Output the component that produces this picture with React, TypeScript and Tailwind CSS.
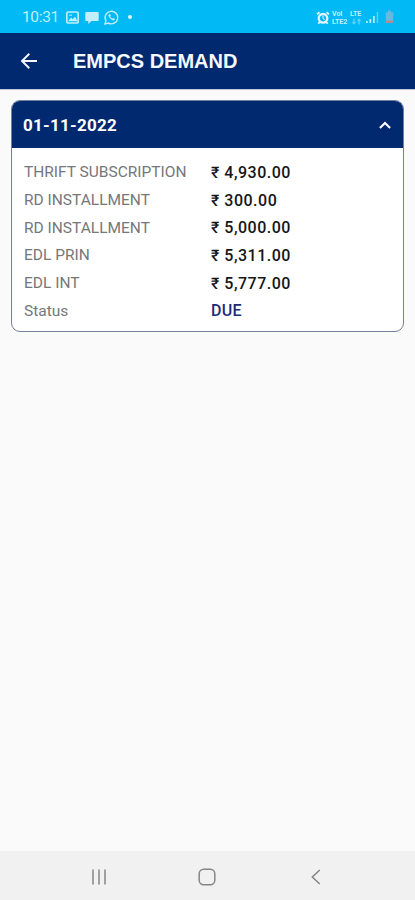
const rows = [
  { label: "THRIFT SUBSCRIPTION", value: "₹ 4,930.00" },
  { label: "RD INSTALLMENT", value: "₹ 300.00" },
  { label: "RD INSTALLMENT", value: "₹ 5,000.00" },
  { label: "EDL PRIN", value: "₹ 5,311.00" },
  { label: "EDL INT", value: "₹ 5,777.00" },
];

function StatusBar() {
  return (
    <div className="flex h-[33px] shrink-0 items-center bg-[#00b9f5] pt-[2px] pl-[22px] text-[#c3effd]">
      <span className="w-[44px] text-[15.5px] tracking-[-0.35px]">10:31</span>
      <svg className="h-[13px] w-[13px]" viewBox="0 0 13 13" fill="none">
        <rect x="0.8" y="1" width="11.4" height="11" rx="1.5" stroke="currentColor" strokeWidth="1.7" />
        <path d="M2 10.300 5 6.600l1.800 1.700L9 5.500l2.500 4.800Z" fill="currentColor" />
        <path d="M3 4.200h3" stroke="currentColor" />
      </svg>
      <svg className="ml-[6px] h-[13px] w-[14px]" viewBox="0 0 14 13" fill="currentColor">
        <path d="M1.3 1h11.4q1 0 1 1v7q0 1-1 1H6.5l-3.2 3v-3h-2q-1 0-1-1V2q0-1 1-1Z" />
      </svg>
      <svg className="ml-[5px] h-[15px] w-[15px]" viewBox="0 0 15 15" fill="none" stroke="currentColor">
        <path d="m1 14 .9-3.4a6.3 6.3 0 1 1 2.5 2.5Z" strokeWidth="1.4" />
        <path d="M5.2 4.3c-1 .8-.4 2.7 1.1 4.2s3.4 2.2 4.2 1.2l.2-.8-1.6-.8-.7.8C7.300 8.500 6.500 7.700 6 6.500l.7-.7L6 4.200Z" fill="currentColor" strokeWidth="0.4" />
      </svg>
      <span className="mb-[1px] ml-[9px] h-1 w-1 rounded-full bg-[#d9f5fe]" />
      <svg className="ml-[184px] h-[14px] w-[14px]" viewBox="0 0 14 14" fill="none" stroke="#e2f8ff">
        <circle cx="7" cy="7.300" r="4.300" strokeWidth="2.300" />
        <path d="M1 3.300 3.500 1.300M13 3.300 10.500 1.300M3.700 11 2.300 12.700M10.300 11l1.400 1.700" strokeWidth="1.800" />
        <path d="M7 4.800v2.700l1.800 1" />
      </svg>
      <div className="ml-[2px] w-[17px] text-[7px] leading-[8px] font-bold">
        <div>VoI</div>
        <div>LTE2</div>
      </div>
      <div className="ml-[1px] w-[15px] text-[7px] leading-[8px] font-bold">
        <div>LTE</div>
        <svg className="ml-[2px] block h-[8px] w-[9px] opacity-50" viewBox="0 0 9 8" fill="none" stroke="currentColor" strokeWidth="1.300">
          <path d="M2 .5v5M.5 4 2 5.800 3.500 4M7 6.500v-5M5.500 3 7 1.200 8.500 3" />
        </svg>
      </div>
      <svg className="ml-[1px] h-[13px] w-[13px]" viewBox="0 0 13 13" fill="currentColor">
        <path d="M0 10h1.700v2H0zM3.500 8h1.700v4H3.500zM7 5h1.700v7H7z" />
        <path d="M10.800 1h1.400v11h-1.400z" opacity=".5" />
      </svg>
      <svg className="mb-[1px] ml-[6px] h-[14px] w-[9px]" viewBox="0 0 9 14">
        <path d="M3 .5h3v1.700h2.200V11H.8V2.200H3Z" fill="#64bcdc" />
        <path d="M.8 10.500h7.400V13H.8Z" fill="#b08f8b" />
      </svg>
    </div>
  );
}

export default function App() {
  return (
    <div className="flex h-[900px] w-[415px] flex-col overflow-hidden bg-[#fafafa] font-[Roboto,sans-serif]">
      <StatusBar />
      <header className="flex h-[57px] shrink-0 items-center border-b border-[#bdc5d8] bg-[#002970] pl-[20px] text-[#f7f9ff]">
        <svg className="h-[18px] w-[18px]" viewBox="0 0 18 18" fill="none" stroke="currentColor" strokeWidth="1.900">
          <path d="M17 9H2.500M9.300 1.800 2 9l7.300 7.200" />
        </svg>
        <h1 className="ml-[35px] font-['Liberation_Sans',sans-serif] text-[20px] font-bold">EMPCS DEMAND</h1>
      </header>
      <main className="flex-1 px-[11px] pt-[10px]">
        <section className="h-[232px] w-[393px] overflow-hidden rounded-[9px] border border-[#74819a] bg-white">
          <div className="flex h-[47px] items-center justify-between bg-[#002970] pt-[1px] pr-[12px] pl-[11px] text-white">
            <h2 className="pt-[1px] text-[17px] font-bold tracking-[0.27px]">01-11-2022</h2>
            <svg className="mb-[1px] h-[8px] w-[12px]" viewBox="0 0 12 8" fill="none" stroke="currentColor" strokeWidth="2.100">
              <path d="m.9 6.900 5.100-5 5.100 5" />
            </svg>
          </div>
          <dl className="pt-[11px] pl-[12px]">
            {rows.map((row, i) => (
              <div key={i} className="flex h-[27.700px] items-center">
                <dt className="w-[187px] text-[15.500px] text-[#75777a]">{row.label}</dt>
                <dd className="text-[16px] font-medium tracking-[0.5px] text-[#161616]">{row.value}</dd>
              </div>
            ))}
            <div className="flex h-[27.700px] items-center">
              <dt className="w-[187px] text-[15.500px] text-[#75777a]">Status</dt>
              <dd className="text-[16px] font-medium tracking-[0.3px] text-[#1c2c78]">DUE</dd>
            </div>
          </dl>
        </section>
      </main>
      <nav className="flex h-[49px] shrink-0 items-center bg-[#f1f1f1] pt-[3px] pl-[91px] text-[#858585]">
        <svg className="h-[16px] w-[16px]" viewBox="0 0 16 16" stroke="currentColor" strokeWidth="1.500">
          <path d="M2 .5v15M8 .5v15M14 .5v15" />
        </svg>
        <svg className="ml-[91px] h-[18px] w-[18px]" viewBox="0 0 18 18" fill="none" stroke="currentColor" strokeWidth="1.500">
          <rect x="1.200" y="1.200" width="15.600" height="15.600" rx="4.500" />
        </svg>
        <svg className="ml-[95px] h-[16px] w-[10px]" viewBox="0 0 10 16" fill="none" stroke="currentColor" strokeWidth="1.500">
          <path d="M8.800 1 1.300 8l7.500 7" />
        </svg>
      </nav>
    </div>
  );
}
